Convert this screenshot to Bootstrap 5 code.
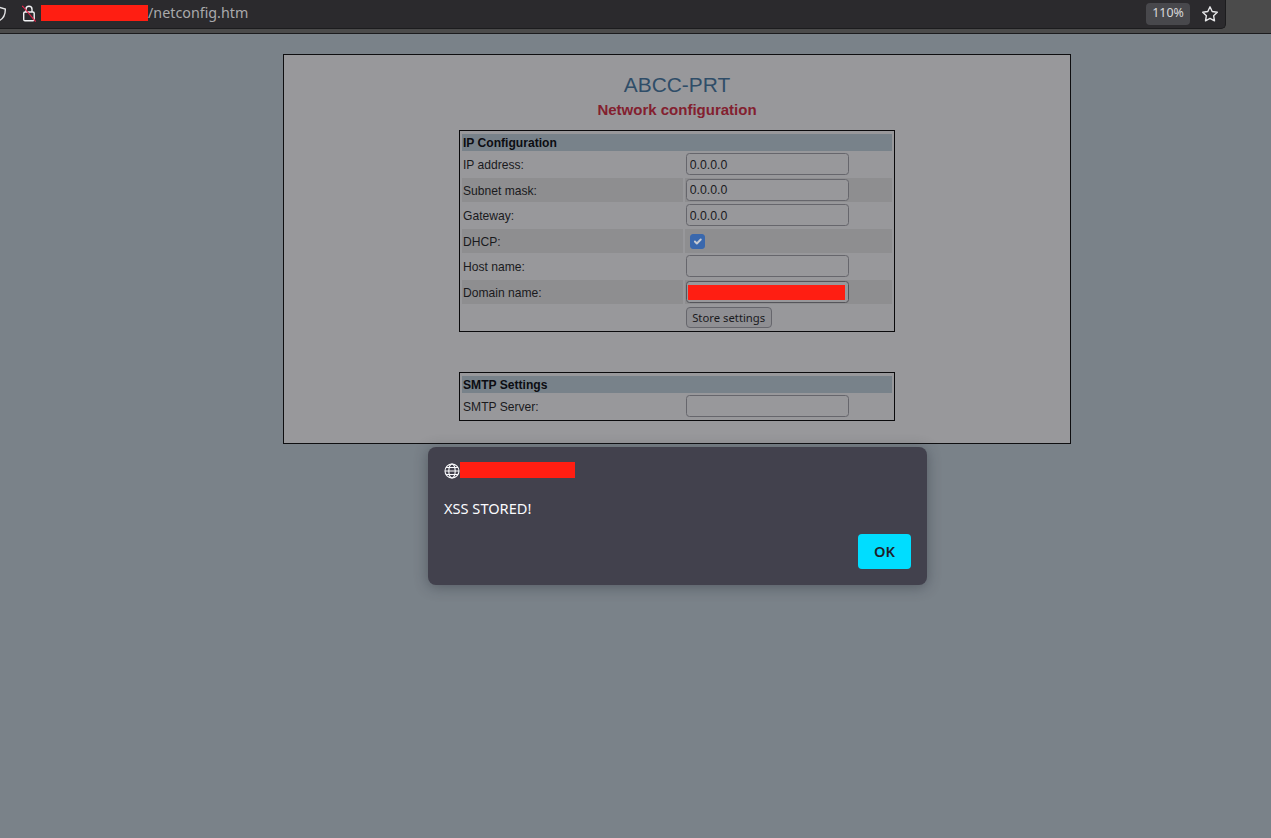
<!DOCTYPE html>
<html lang="en">
<head>
<meta charset="utf-8">
<title>netconfig</title>
<link href="https://cdn.jsdelivr.net/npm/bootstrap@5.3.0/dist/css/bootstrap.min.css" rel="stylesheet">
<style>
html,body{height:100%}
body{background:#7a8289;font-family:"Liberation Sans",Arial,sans-serif;overflow:hidden;position:relative}
.chrome{background:#4b4b4b;height:34px;border-bottom:1px solid #1c1c1e}
.urlbar{width:1226px;height:29px;background:#2b2a2d;border-bottom-right-radius:5px;border-right:1px solid #1c1c1e;border-bottom:1px solid #1c1c1e;font-family:"Noto Sans",sans-serif;padding-bottom:1px}
.shield{margin-left:-9px;margin-right:15px;flex:none}
.lockicon{flex:none}
.redact{background:#ff1e12;display:block;flex:none}
.redact-url{width:107px;height:16px;margin-left:5px;margin-top:-1px}
.url-path{color:#a9a9ab;font-size:14.3px;line-height:1}
.zoompill{background:#48484c;color:#d8d8da;font-size:12.4px;width:44px;height:22px;border-radius:4px;margin-right:11px}
.starbtn{margin-right:6px;flex:none}
.sheet{width:788px;height:390px;margin:20px 0 0 283px;background:#98989b;border:1px solid #0e0e10;padding-top:18px}
.ttl{color:#2f4d68;font-size:20.9px;font-weight:400;line-height:24px;margin:0}
.subttl{color:#83202f;font-size:15px;font-weight:700;line-height:20px;margin:3px 0 10px}
.cfg{width:436px;margin:0 auto;border:1px solid #0a0a0c;border-collapse:separate;border-spacing:2px;padding:1px 0 0;font-size:12.1px;color:#1a1a1d;table-layout:fixed}
.cfg th{background:#78828a;height:16.5px;padding:2px 1px 0;font-size:12.1px;line-height:14.5px;color:#0c0d12;font-weight:700}
.cfg td{height:23.5px;padding:0 1px;vertical-align:middle}
.cfg td.rowlabel{padding-top:2px}
.lab-col{width:220.7px}
.cfg tr.alt td{background:#8e8e90}
.fld{display:block;width:163px;height:22px;background:#98989b;border:1.2px solid #66666c;border-radius:3.5px;color:#1a1a1d;font:12.3px "Liberation Sans",sans-serif;padding:1px 3px 0;outline:0}
.fld-red{background:linear-gradient(#ff1e12,#ff1e12) content-box no-repeat,#98989b;padding:3px 3px 2px 1px;border-color:#55555a}
.cfg .form-check-input{display:block;margin:1px 0 0 4px;width:15px;height:15px;background-color:#3a68ad;border-color:#3a68ad;border-radius:3px;box-shadow:none;float:none;background-image:url("data:image/svg+xml,%3csvg xmlns='http://www.w3.org/2000/svg' viewBox='0 0 20 20'%3e%3cpath fill='none' stroke='%23c6cad2' stroke-linecap='round' stroke-linejoin='round' stroke-width='3' d='m6 10 3 3 6-6'/%3e%3c/svg%3e")}
.savebtn{display:block;width:86px;height:21px;padding:0;background:#8f8f93;border:1.2px solid #66666c;border-radius:4px;color:#1a1a1d;font:11.3px/1 "Noto Sans",sans-serif}
.gap-tbl{margin-top:40px!important}
.alertbox{position:absolute;left:428px;top:447px;width:499px;height:138px;background:#42414d;border-radius:8px;box-shadow:0 2px 14px rgba(40,45,55,.45);padding:16px;font-family:"Noto Sans",sans-serif;color:#fbfbfe}
.globe{flex:none}
.redact-host{width:115px;height:16px;margin-top:-3px}
.alertmsg{font-size:14.6px;line-height:20px;margin:19px 0 0}
.okbtn{background:#00ddff;color:#1f2128;border:0;border-radius:4px;width:53px;height:35px;font-size:14.6px;font-weight:600;padding:0;position:absolute;right:16px;bottom:16px}
</style>
</head>
<body>
<div class="chrome">
  <div class="urlbar d-flex align-items-center">
    <svg class="shield" width="16" height="16" viewBox="0 0 16 16" fill="none" stroke="#e4e4e6" stroke-width="1.4"><path d="M8 1.2 14.3 3c.2 5.500-1.700 9.500-6.300 11.800C3.400 12.500 1.500 8.500 1.700 3z"/></svg>
    <svg class="lockicon" width="14" height="17" viewBox="0 0 14 17" fill="none"><rect x="1.700" y="7" width="10.500" height="8.800" rx="1.300" stroke="#f2f2f4" stroke-width="1.400"/><path d="M4 7V4.300a3 3 0 0 1 6 0V7" stroke="#f2f2f4" stroke-width="1.400"/><path d="M.3.800 13.700 16.500" stroke="#e0254a" stroke-width="1.200"/></svg>
    <span class="redact redact-url"></span>
    <span class="url-path">/netconfig.htm</span>
    <span class="zoompill d-flex align-items-center justify-content-center ms-auto">110%</span>
    <svg class="starbtn" width="18" height="18" viewBox="0 0 18 18" fill="none" stroke="#e6e6e8" stroke-width="1.400" stroke-linejoin="round"><path d="M9 1.800 11.200 6.500l5.100.7-3.700 3.500.9 5.100L9 13.400l-4.500 2.400.9-5.100L1.700 7.200l5.100-.7z"/></svg>
  </div>
</div>
<main class="sheet text-center">
  <h1 class="ttl">ABCC-PRT</h1>
  <h2 class="subttl">Network configuration</h2>
  <table class="cfg text-start">
    <colgroup><col class="lab-col"><col></colgroup>
    <tbody>
      <tr><th colspan="2">IP Configuration</th></tr>
      <tr><td class="rowlabel">IP address:</td><td><input class="fld" value="0.0.0.0"></td></tr>
      <tr class="alt"><td class="rowlabel">Subnet mask:</td><td><input class="fld" value="0.0.0.0"></td></tr>
      <tr><td class="rowlabel">Gateway:</td><td><input class="fld" value="0.0.0.0"></td></tr>
      <tr class="alt"><td class="rowlabel">DHCP:</td><td><input class="form-check-input" type="checkbox" checked></td></tr>
      <tr><td class="rowlabel">Host name:</td><td><input class="fld"></td></tr>
      <tr class="alt"><td class="rowlabel">Domain name:</td><td><input class="fld fld-red"></td></tr>
      <tr><td></td><td><button class="savebtn" type="button">Store settings</button></td></tr>
    </tbody>
  </table>
  <table class="cfg gap-tbl text-start">
    <colgroup><col class="lab-col"><col></colgroup>
    <tbody>
      <tr><th colspan="2">SMTP Settings</th></tr>
      <tr><td class="rowlabel">SMTP Server:</td><td><input class="fld"></td></tr>
    </tbody>
  </table>
</main>
<div class="alertbox" role="alertdialog">
  <div class="d-flex align-items-center">
    <svg class="globe" width="16" height="16" viewBox="0 0 16 16" fill="none" stroke="#fbfbfe" stroke-width="1.100"><circle cx="8" cy="8" r="7"/><ellipse cx="8" cy="8" rx="3.200" ry="7"/><path d="M1 8h14M2 4.500h12M2 11.500h12"/></svg>
    <span class="redact redact-host"></span>
  </div>
  <p class="alertmsg">XSS STORED!</p>
  <button class="okbtn" type="button">OK</button>
</div>
<script src="https://cdn.jsdelivr.net/npm/bootstrap@5.3.0/dist/js/bootstrap.bundle.min.js"></script>
</body>
</html>
